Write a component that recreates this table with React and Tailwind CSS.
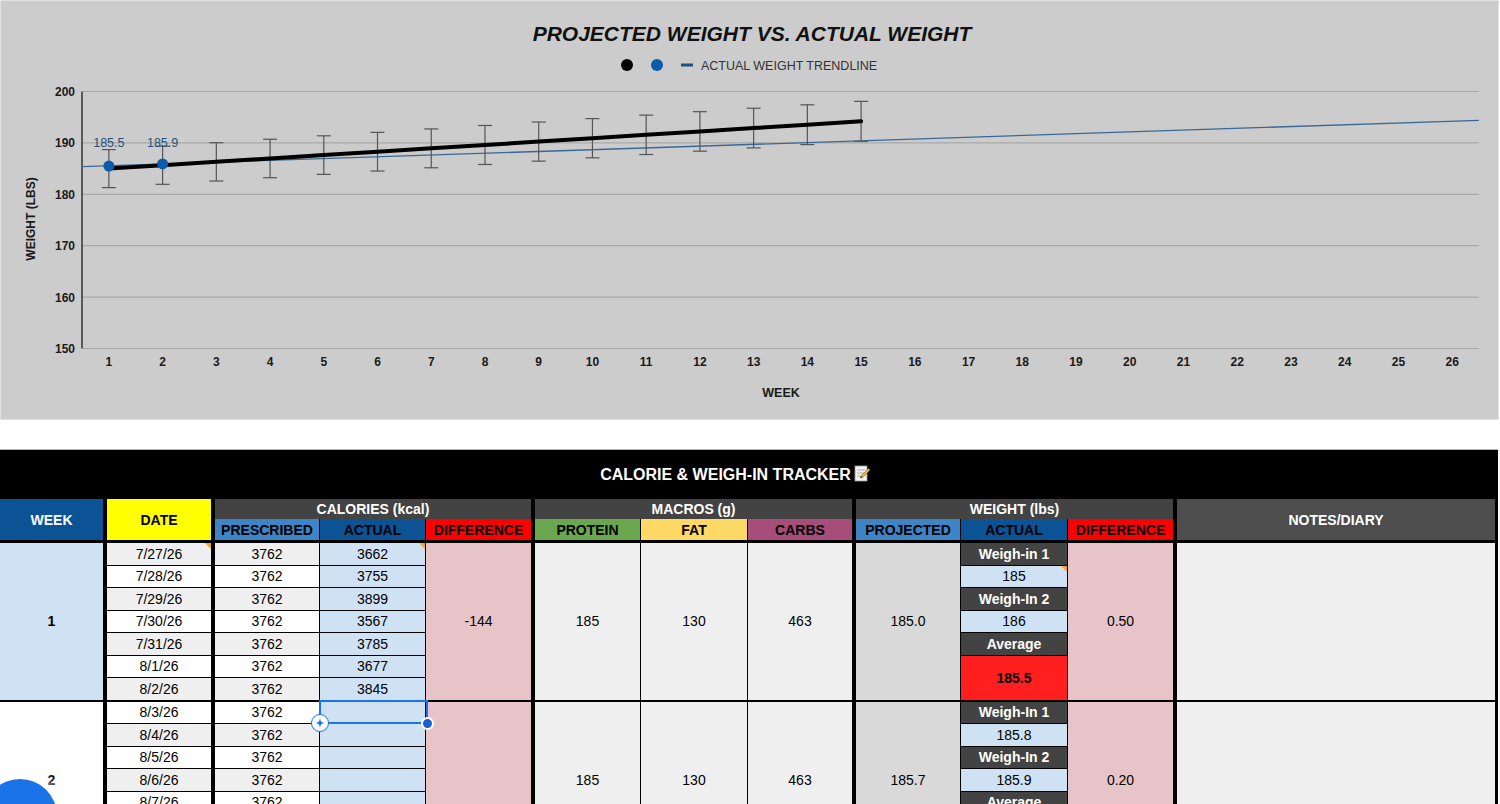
import React from 'react'

const weeks = [
  {
    week: 1,
    weekBg: 'bg-[#cfe2f3]',
    dates: ['7/27/26', '7/28/26', '7/29/26', '7/30/26', '7/31/26', '8/1/26', '8/2/26'],
    actual: ['3662', '3755', '3899', '3567', '3785', '3677', '3845'],
    diff: '-144',
    protein: '185',
    fat: '130',
    carbs: '463',
    projected: '185.0',
    weighIns: ['Weigh-in 1', '185', 'Weigh-In 2', '186', 'Average'],
    average: '185.5',
    weightDiff: '0.50',
  },
  {
    week: 2,
    weekBg: 'bg-white',
    dates: ['8/3/26', '8/4/26', '8/5/26', '8/6/26', '8/7/26', '8/8/26', '8/9/26'],
    actual: ['', '', '', '', '', '', ''],
    diff: '',
    protein: '185',
    fat: '130',
    carbs: '463',
    projected: '185.7',
    weighIns: ['Weigh-In 1', '185.8', 'Weigh-In 2', '185.9', 'Average'],
    average: '',
    weightDiff: '0.20',
  },
]

// orange comment flag in the top-right corner of a cell
function Note() {
  return (
    <div className="absolute top-0 right-0 w-0 h-0 border-l-[6px] border-l-transparent border-t-[6px] border-t-[#f4a81c]" />
  )
}

function Chart() {
  const X0 = 81
  const X1 = 1478
  const step = (X1 - X0) / 26
  const wx = i => X0 + (i - 0.5) * step
  const wy = v => 90.5 + (200 - v) * 5.14
  const projected = Array.from({ length: 15 }, (_, i) => 185 + i * 0.657)
  const ticks = [200, 190, 180, 170, 160, 150]
  const actual = [
    { week: 1, value: 185.5 },
    { week: 2, value: 185.9 },
  ]

  return (
    <div className="w-[1499px] h-[420px] bg-[#cccccc] border border-[#e2e2e2]">
      <svg width="1497" height="418" className="block" fontFamily="'Liberation Sans', Arial, sans-serif">
        <text x="751" y="40" textAnchor="middle" fontSize="21" fontWeight="bold" fontStyle="italic" fill="#111">
          PROJECTED WEIGHT VS. ACTUAL WEIGHT
        </text>

        {/* legend */}
        <circle cx="626" cy="64" r="6" fill="#000" />
        <circle cx="656" cy="64" r="6" fill="#0b5cad" />
        <rect x="680" y="62.5" width="12" height="3" fill="#24507e" />
        <text x="700" y="68.5" fontSize="12.5" fill="#333">ACTUAL WEIGHT TRENDLINE</text>

        {ticks.map(t => (
          <g key={t}>
            <line x1={X0} x2={X1} y1={wy(t)} y2={wy(t)} stroke="#a9a9a9" strokeWidth="1.2" />
            <text x="74" y={wy(t) + 4.5} textAnchor="end" fontSize="12" fontWeight="bold" fill="#1a1a1a">{t}</text>
          </g>
        ))}
        <line x1={X0} x2={X0} y1={wy(200)} y2={wy(150)} stroke="#333" strokeWidth="1.5" />

        {Array.from({ length: 26 }, (_, i) => (
          <text key={i} x={wx(i + 1)} y="364.5" textAnchor="middle" fontSize="12" fontWeight="bold" fill="#1a1a1a">
            {i + 1}
          </text>
        ))}
        <text x="780" y="395.5" textAnchor="middle" fontSize="12.5" fontWeight="bold" fill="#1a1a1a">WEEK</text>
        <text x="33.5" y="218" transform="rotate(-90 33.5 218)" textAnchor="middle" fontSize="12" fontWeight="bold" fill="#1a1a1a">
          WEIGHT (LBS)
        </text>

        {/* trendline */}
        <line x1={X0} y1="165.6" x2={X1} y2="119.3" stroke="#3b6898" strokeWidth="1.3" />

        {/* error bars */}
        {projected.map((v, i) => {
          const x = wx(i + 1)
          const top = wy(v * 1.02)
          const bottom = wy(v * 0.98)
          return (
            <g key={i} stroke="#555" strokeWidth="1.2">
              <line x1={x} x2={x} y1={top} y2={bottom} />
              <line x1={x - 7} x2={x + 7} y1={top} y2={top} />
              <line x1={x - 7} x2={x + 7} y1={bottom} y2={bottom} />
            </g>
          )
        })}

        <polyline
          points={projected.map((v, i) => `${wx(i + 1)},${wy(v)}`).join(' ')}
          fill="none"
          stroke="#000"
          strokeWidth="4"
          strokeLinecap="round"
        />

        {actual.map(p => (
          <g key={p.week}>
            <circle cx={wx(p.week)} cy={wy(p.value)} r="5.5" fill="#0b5cad" />
            <text x={wx(p.week)} y="146" textAnchor="middle" fontSize="12.5" fill="#23527c">{p.value}</text>
          </g>
        ))}
      </svg>
    </div>
  )
}

function MemoIcon() {
  return (
    <svg width="16" height="17" viewBox="0 0 16 17" className="inline-block ml-[3px] -mt-[2px]">
      <rect x="1" y="1" width="12" height="15" fill="#f4f4f4" stroke="#9a9a9a" strokeWidth="0.8" />
      <line x1="3" x2="11" y1="5" y2="5" stroke="#8aa0b8" strokeWidth="0.8" />
      <line x1="3" x2="11" y1="8" y2="8" stroke="#8aa0b8" strokeWidth="0.8" />
      <line x1="3" x2="9" y1="11" y2="11" stroke="#8aa0b8" strokeWidth="0.8" />
      <path d="M14.5 3.5 L16 5 L8.5 12.5 L6.5 13 L7 11 Z" fill="#f6b73c" stroke="#8a5a12" strokeWidth="0.6" />
      <path d="M6.5 13 L7 11 L8.5 12.5 Z" fill="#333" />
    </svg>
  )
}

function HeaderGroup({ title, subs }) {
  return (
    <div className="flex flex-col">
      <div className="h-[20px] bg-[#434343] text-white font-bold flex items-center justify-center">{title}</div>
      <div className="h-[21px] flex gap-px">
        {subs.map(s => (
          <div key={s.label} className={`${s.w} ${s.bg} text-black font-bold flex items-center justify-center`}>
            {s.label}
          </div>
        ))}
      </div>
    </div>
  )
}

function Header() {
  return (
    <div className="flex gap-[4px] h-[41px]">
      <div className="w-[103px] bg-[#0b5394] text-white font-bold flex items-center justify-center">WEEK</div>
      <div className="w-[104px] bg-[#ffff00] text-black font-bold flex items-center justify-center">DATE</div>
      <HeaderGroup
        title="CALORIES (kcal)"
        subs={[
          { label: 'PRESCRIBED', w: 'w-[104px]', bg: 'bg-[#3d85c6]' },
          { label: 'ACTUAL', w: 'w-[105px]', bg: 'bg-[#0b5394]' },
          { label: 'DIFFERENCE', w: 'w-[105px]', bg: 'bg-[#ff0000]' },
        ]}
      />
      <HeaderGroup
        title="MACROS (g)"
        subs={[
          { label: 'PROTEIN', w: 'w-[105px]', bg: 'bg-[#6aa84f]' },
          { label: 'FAT', w: 'w-[106px]', bg: 'bg-[#ffd966]' },
          { label: 'CARBS', w: 'w-[104px]', bg: 'bg-[#a64d79]' },
        ]}
      />
      <HeaderGroup
        title="WEIGHT (lbs)"
        subs={[
          { label: 'PROJECTED', w: 'w-[104px]', bg: 'bg-[#3d85c6]' },
          { label: 'ACTUAL', w: 'w-[106px]', bg: 'bg-[#0b5394]' },
          { label: 'DIFFERENCE', w: 'w-[105px]', bg: 'bg-[#ff0000]' },
        ]}
      />
      <div className="flex-1 bg-[#4d4d4d] text-white font-bold flex items-center justify-center mr-[3px]">NOTES/DIARY</div>
    </div>
  )
}

function WeekBlock({ w, offset }) {
  const stripe = i => ((offset + i) % 2 === 0 ? 'bg-[#efefef]' : 'bg-white')
  const isFirst = offset === 0

  return (
    <div className="flex gap-[4px] h-[156.5px]">
      <div className={`w-[103px] ${w.weekBg} font-bold flex items-center justify-center`}>{w.week}</div>

      <div className="w-[104px] flex flex-col gap-px">
        {w.dates.map((d, i) => (
          <div key={d} className={`h-[21.5px] relative ${stripe(i)} flex items-center justify-center`}>
            {d}
            {isFirst && i === 0 && <Note />}
          </div>
        ))}
      </div>

      <div className="flex gap-px">
        <div className="w-[104px] flex flex-col gap-px">
          {w.dates.map((d, i) => (
            <div key={d} className={`h-[21.5px] ${stripe(i)} flex items-center justify-center`}>3762</div>
          ))}
        </div>
        <div className="w-[105px] flex flex-col gap-px">
          {w.actual.map((a, i) => (
            <div key={i} className="h-[21.5px] relative bg-[#cfe2f3] flex items-center justify-center">
              {a}
              {isFirst && i === 0 && <Note />}
              {!isFirst && i === 0 && (
                <>
                  <div className="absolute -left-px -top-[2px] -right-[3px] -bottom-px border-2 border-[#1a73e8] z-10" />
                  <div className="absolute -left-[9px] -bottom-[9px] w-[18px] h-[18px] rounded-full bg-white border-[1.5px] border-[#1a73e8] flex items-center justify-center z-20">
                    <svg width="10" height="10" viewBox="-5 -5 10 10">
                      <path d="M0 -5 C0.6 -1.2 1.2 -0.6 5 0 C1.2 0.6 0.6 1.2 0 5 C-0.6 1.2 -1.2 0.6 -5 0 C-1.2 -0.6 -0.6 -1.2 0 -5 Z" fill="#1a73e8" />
                    </svg>
                  </div>
                  <div className="absolute -right-[9px] -bottom-[7px] w-[13px] h-[13px] rounded-full bg-[#1a5fd6] border-2 border-white z-20" />
                </>
              )}
            </div>
          ))}
        </div>
        <div className="w-[105px] bg-[#e7c4c8] flex items-center justify-center">{w.diff}</div>
      </div>

      <div className="flex gap-px">
        <div className="w-[105px] bg-[#efefef] flex items-center justify-center">{w.protein}</div>
        <div className="w-[106px] bg-[#efefef] flex items-center justify-center">{w.fat}</div>
        <div className="w-[104px] bg-[#efefef] flex items-center justify-center">{w.carbs}</div>
      </div>

      <div className="flex gap-px">
        <div className="w-[104px] bg-[#d9d9d9] flex items-center justify-center">{w.projected}</div>
        <div className="w-[106px] flex flex-col gap-px">
          {w.weighIns.map((label, i) => (
            <div
              key={i}
              className={`h-[21.5px] relative flex items-center justify-center ${
                i % 2 === 0 ? 'bg-[#434343] text-white font-bold' : 'bg-[#cfe2f3]'
              }`}
            >
              {label}
              {isFirst && i === 1 && <Note />}
            </div>
          ))}
          <div className="h-[44px] bg-[#ff1f1f] font-bold flex items-center justify-center">{w.average}</div>
        </div>
        <div className="w-[105px] bg-[#e7c4c8] flex items-center justify-center">{w.weightDiff}</div>
      </div>

      <div className="flex-1 bg-[#efefef] mr-[3px]" />
    </div>
  )
}

export default function App() {
  return (
    <div className="relative w-[1500px] h-[804px] overflow-hidden bg-white font-['Liberation_Sans',Arial,sans-serif] text-black">
      <Chart />

      {/* tracker table */}
      <div className="mt-[29px] w-[1498px] border-t border-[#b5b5b5] bg-black text-[14px] leading-none flex flex-col">
        <div className="h-[49px] flex items-center justify-center pr-[28px] text-white font-bold text-[16px]">
          CALORIE &amp; WEIGH-IN TRACKER
          <MemoIcon />
        </div>
        <Header />
        <div className="flex flex-col gap-[2px] mt-[3px]">
          {weeks.map((w, i) => (
            <WeekBlock key={w.week} w={w} offset={i * 7} />
          ))}
        </div>
      </div>

      {/* floating explore button */}
      <div className="absolute left-[-17px] top-[779px] w-[74px] h-[74px] rounded-full bg-[#1a73e8] shadow-[0_0_14px_6px_rgba(255,255,255,0.9)]" />
    </div>
  )
}
